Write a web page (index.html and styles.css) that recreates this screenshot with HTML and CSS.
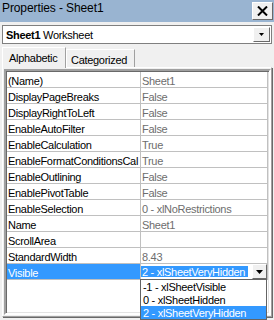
FILE: index.html
```html
<!DOCTYPE html>
<html>
<head>
    <title>Properties - Sheet1</title>
    <link rel="stylesheet" href="styles.css">
</head>
<body>
    <div class="window">
        <div class="titlebar">
            <span class="title">Properties - Sheet1</span>
            <div class="close-btn">
                <svg width="11" height="10" viewBox="0 0 11 10"><path d="M1 0.5 L10 9.5 M10 0.5 L1 9.5" stroke="#000" stroke-width="2" fill="none"/></svg>
            </div>
        </div>

        <div class="obj-combo">
            <span class="obj-text"><b>Sheet1</b> Worksheet</span>
            <div class="combo-btn">
                <svg width="5" height="3" viewBox="0 0 5 3"><polygon points="0,0 5,0 2.5,3" fill="#000"/></svg>
            </div>
        </div>

        <div class="tabs">
            <div class="tab active">Alphabetic</div>
            <div class="tab">Categorized</div>
        </div>

        <div class="page">
            <div class="grid">
                <div class="row"><div class="name">(Name)</div><div class="value">Sheet1</div></div>
                <div class="row"><div class="name">DisplayPageBreaks</div><div class="value">False</div></div>
                <div class="row"><div class="name">DisplayRightToLeft</div><div class="value">False</div></div>
                <div class="row"><div class="name">EnableAutoFilter</div><div class="value">False</div></div>
                <div class="row"><div class="name">EnableCalculation</div><div class="value">True</div></div>
                <div class="row"><div class="name">EnableFormatConditionsCal</div><div class="value">True</div></div>
                <div class="row"><div class="name">EnableOutlining</div><div class="value">False</div></div>
                <div class="row"><div class="name">EnablePivotTable</div><div class="value">False</div></div>
                <div class="row"><div class="name">EnableSelection</div><div class="value">0 - xlNoRestrictions</div></div>
                <div class="row"><div class="name">Name</div><div class="value">Sheet1</div></div>
                <div class="row"><div class="name">ScrollArea</div><div class="value"></div></div>
                <div class="row"><div class="name">StandardWidth</div><div class="value">8.43</div></div>
                <div class="row selected">
                    <div class="name">Visible</div>
                    <div class="value editing">
                        <span class="sel-text">2 - xlSheetVeryHidden</span>
                        <div class="cell-btn">
                            <svg width="7" height="4" viewBox="0 0 7 4"><polygon points="0,0 7,0 3.5,4" fill="#000"/></svg>
                        </div>
                    </div>
                </div>
            </div>
        </div>

        <div class="drop-list">
            <div class="item">-1 - xlSheetVisible</div>
            <div class="item">0 - xlSheetHidden</div>
            <div class="item current">2 - xlSheetVeryHidden</div>
        </div>
    </div>
</body>
</html>
```

FILE: styles.css
```css
body {
    margin: 0;
    width: 274px;
    height: 320px;
    overflow: hidden;
    background-color: #f0f0f0;
    font-family: "Liberation Sans", Arial, sans-serif;
    font-size: 11px;
    letter-spacing: -0.3px;
    color: #000;
}
.window {
    position: relative;
    height: 320px;
    display: flex;
    flex-direction: column;
}

/* title bar */
.titlebar {
    height: 22px;
    background-color: #99b4d1;
    display: flex;
    justify-content: space-between;
    align-items: flex-start;
}
.title {
    font-size: 12px;
    line-height: 13px;
    padding: 2px 0 0 2px;
    letter-spacing: -0.1px;
}
.close-btn {
    width: 21px;
    height: 18px;
    margin: 2px 1px 0 0;
    box-sizing: border-box;
    border: 1px solid;
    border-color: #fff #696969 #696969 #fff;
    background-color: #f0f0f0;
    display: flex;
    align-items: center;
    justify-content: center;
}

/* object combo */
.obj-combo {
    margin: 3px 2px 0 2px;
    height: 19px;
    box-sizing: border-box;
    border: 1px solid #7f7f7f;
    background-color: #fff;
    display: flex;
    align-items: flex-start;
}
.obj-text {
    padding: 1px 0 0 3px;
    line-height: 16px;
    white-space: nowrap;
}
.combo-btn {
    margin: 1px 1px 0 auto;
    width: 17px;
    height: 15px;
    box-sizing: border-box;
    border: 1px solid;
    border-color: #fff #696969 #696969 #fff;
    background-color: #f0f0f0;
    display: flex;
    align-items: center;
    justify-content: center;
}

/* tabs */
.tabs {
    display: flex;
    align-items: flex-end;
    height: 20px;
    margin: 3px 0 0 2px;
    position: relative;
    z-index: 1;
}
.tab {
    height: 18px;
    box-sizing: border-box;
    border: 1px solid;
    border-color: #fff #a0a0a0 transparent #fff;
    border-bottom: none;
    background-color: #f0f0f0;
    padding: 3px 0 0 4px;
    line-height: 14px;
    width: 69px;
}
.tab.active {
    height: 21px;
    width: 64px;
    margin-bottom: -1px;
    padding-left: 6px;
}

/* tab page + property grid */
.page {
    margin-left: 2px;
    width: 270px;
    height: 250px;
    box-sizing: border-box;
    border: 1px solid;
    border-color: #fff #a0a0a0 #a0a0a0 #fff;
    box-shadow: 1px 1px 0 #696969;
    display: flex;
    flex-direction: column;
}
.grid {
    flex: 1;
    margin: 1px 0 1px 1px;
    border: 2px solid;
    border-color: #a0a0a0 #fff #fff #a0a0a0;
    padding: 1px;
    box-shadow: inset 1px 1px 0 #696969, inset -1px -1px 0 #e3e3e3;
    background-color: #fff;
}
.row {
    display: flex;
    height: 16px;
    box-sizing: border-box;
    border-bottom: 1px solid #c0c0c0;
}
.name,
.value {
    box-sizing: border-box;
    border-right: 1px solid #c0c0c0;
    padding: 2px 0 0 1px;
    line-height: 14px;
    white-space: nowrap;
    overflow: hidden;
}
.name {
    width: 134px;
}
.value {
    flex: 1;
    color: #6d6d6d;
}
.row.selected .name {
    background-color: #3399ff;
    color: #fff;
}
.value.editing {
    display: flex;
    align-items: flex-start;
    padding: 0;
}
.sel-text {
    margin-top: 2px;
    height: 11px;
    line-height: 12px;
    padding: 0 3px 0 1px;
    background-color: #3399ff;
    color: #fff;
}
.cell-btn {
    margin-left: auto;
    width: 15px;
    height: 15px;
    box-sizing: border-box;
    border: 1px solid;
    border-color: #fff #696969 #696969 #fff;
    background-color: #f0f0f0;
    display: flex;
    align-items: center;
    justify-content: center;
}

/* open dropdown over the grid */
.drop-list {
    position: absolute;
    left: 140px;
    top: 279px;
    width: 127px;
    height: 41px;
    box-sizing: border-box;
    border: 1px solid #646464;
    background-color: #fff;
    z-index: 2;
}
.drop-list .item {
    height: 13px;
    line-height: 15px;
    padding-left: 2px;
    overflow: hidden;
    white-space: nowrap;
}
.drop-list .item.current {
    background-color: #3399ff;
    color: #fff;
}
```
